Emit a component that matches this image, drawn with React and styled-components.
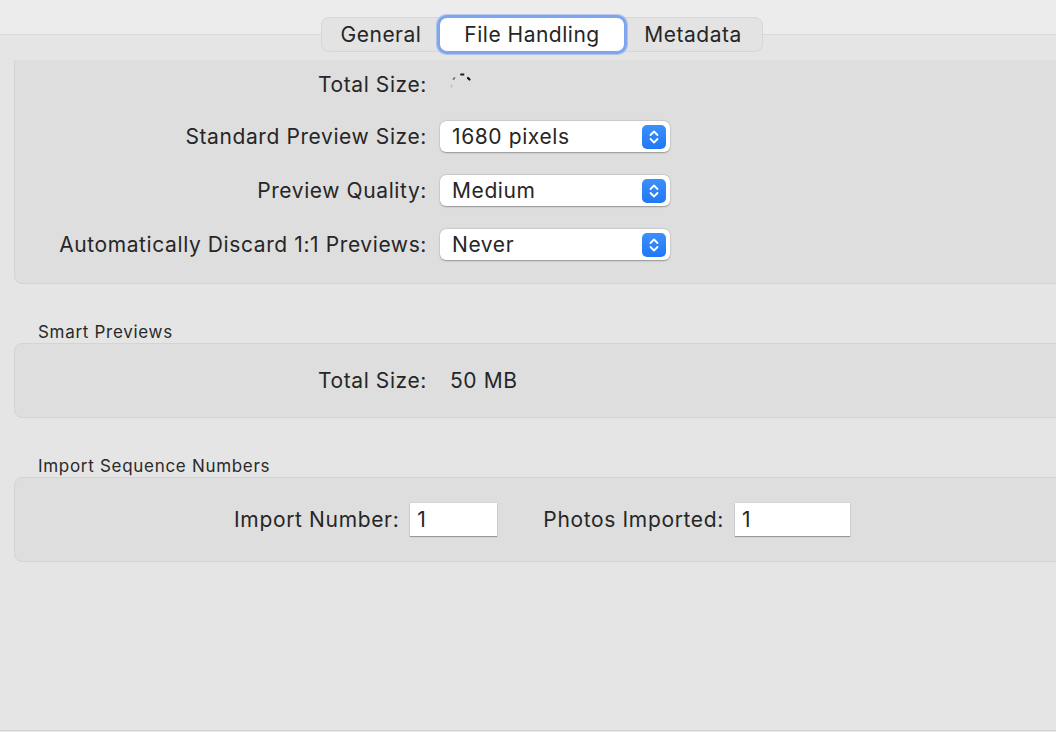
import React from "react";
import styled, { createGlobalStyle } from "styled-components";

const Global = createGlobalStyle`
  html, body { margin: 0; padding: 0; background: #e5e5e5; overflow: hidden; }
  body { font-family: Inter, "Noto Sans", "Liberation Sans", sans-serif; color: #262626; }
  * { box-sizing: border-box; }
`;

const Window = styled.div`
  width: 1084px;
  height: 731px;
  background: #e5e5e5;
  border-bottom: 1px solid #d3d3d3;
  display: flex;
  flex-direction: column;
  position: relative;
`;

const TopBar = styled.div`
  height: 35px;
  background: #ececec;
  border-bottom: 1px solid #d9d9d9;
  flex-shrink: 0;
`;

const TabsWrap = styled.div`
  position: absolute;
  top: 17px;
  left: 0;
  right: 0;
  display: flex;
  justify-content: center;
  z-index: 2;
`;

const Segmented = styled.div`
  display: flex;
  height: 35px;
  background: #e3e3e3;
  border: 1px solid #d6d6d6;
  border-radius: 8px;
`;

const Tab = styled.div`
  height: 100%;
  width: ${(p) => p.$w}px;
  display: flex;
  align-items: center;
  justify-content: center;
  font-size: 21px;
  letter-spacing: 0.5px;
  color: #262626;
  position: relative;
  ${(p) =>
    p.$active &&
    `
    background: #ffffff;
    border-radius: 7px;
    box-shadow: 0 0 0 3px #7ea5ee, 0 0 0 4px rgba(126,165,238,0.5);
  `}
`;

const Content = styled.div`
  padding: 25px 14px 0;
  display: flex;
  flex-direction: column;
`;

const Panel = styled.div`
  background: #dedede;
  border: 1px solid #d4d4d4;
  border-radius: 8px;
  ${(p) => p.$clipped && `border-top: none; border-top-left-radius: 0; border-top-right-radius: 0;`}
`;

const FormGrid = styled.div`
  display: grid;
  grid-template-columns: 412px 1fr;
  column-gap: 13px;
  row-gap: 23px;
  padding: 11px 0 23px;
  align-items: center;
`;

const Label = styled.div`
  font-size: 21px;
  letter-spacing: 0.6px;
  text-align: right;
  color: #262626;
  white-space: nowrap;
  line-height: ${(p) => p.$h || 31}px;
`;

const Value = styled.div`
  font-size: 21px;
  letter-spacing: 0.6px;
  padding-left: ${(p) => p.$pad || 10}px;
  color: #262626;
  display: flex;
  align-items: center;
  height: ${(p) => p.$h || 31}px;
`;

const Select = styled.div`
  width: 230px;
  height: 31px;
  background: #ffffff;
  border-radius: 6px;
  box-shadow: 0 0.5px 1.5px rgba(0, 0, 0, 0.3), 0 0 0 0.5px rgba(0, 0, 0, 0.06);
  display: flex;
  align-items: center;
  justify-content: space-between;
  padding: 0 4px 0 12px;
  font-size: 21px;
  letter-spacing: 0.6px;
  color: #262626;
`;

const Stepper = styled.div`
  width: 24px;
  height: 24px;
  border-radius: 5px;
  background: linear-gradient(#3d8ffb, #1f78f5);
  display: flex;
  align-items: center;
  justify-content: center;
`;

const SectionTitle = styled.div`
  font-size: 17px;
  letter-spacing: 0.7px;
  color: #2a2a2a;
  padding-left: 24px;
  margin-top: 38px;
  margin-bottom: 1px;
  line-height: 20px;
`;

const SingleRow = styled.div`
  display: grid;
  grid-template-columns: 412px 1fr;
  column-gap: 13px;
  align-items: center;
  height: 73px;
`;

const InputRow = styled.div`
  display: flex;
  justify-content: center;
  align-items: center;
  height: 83px;
  gap: 10px;
`;

const Field = styled.div`
  display: flex;
  align-items: center;
  gap: 11px;
  margin-right: ${(p) => p.$mr || 0}px;
`;

const InputLabel = styled.span`
  font-size: 21px;
  letter-spacing: 0.65px;
  color: #262626;
`;

const TextInput = styled.div`
  width: ${(p) => p.$w}px;
  height: 33px;
  background: #ffffff;
  box-shadow: 0 1px 1px rgba(0, 0, 0, 0.28), 0 0 0 0.5px rgba(0, 0, 0, 0.08);
  font-size: 21px;
  display: flex;
  align-items: center;
  padding-left: 7px;
  color: #262626;
`;

const Chevrons = () => (
  <svg width="12" height="16" viewBox="0 0 12 16">
    <path d="M2.5 6 L6 2.5 L9.5 6" fill="none" stroke="#fff" strokeWidth="1.8" strokeLinecap="round" strokeLinejoin="round" />
    <path d="M2.5 10 L6 13.5 L9.5 10" fill="none" stroke="#fff" strokeWidth="1.8" strokeLinecap="round" strokeLinejoin="round" />
  </svg>
);

const Spinner = () => (
  <svg width="28" height="28" viewBox="0 0 28 28">
    <g strokeLinecap="round" strokeWidth="1.8">
      <line x1="14" y1="3.5" x2="16.5" y2="3.5" stroke="#1a1a1a" />
      <line x1="21" y1="7" x2="22.5" y2="8.5" stroke="#111" strokeWidth="2.2" />
      <line x1="6.5" y1="8" x2="7.5" y2="7" stroke="#777" />
      <line x1="4.5" y1="14" x2="4.5" y2="16" stroke="#bdbdbd" strokeWidth="1.4" />
    </g>
  </svg>
);

const SelectBox = ({ children }) => (
  <Select>
    <span>{children}</span>
    <Stepper>
      <Chevrons />
    </Stepper>
  </Select>
);

export default function App() {
  return (
    <>
      <Global />
      <Window>
        <TopBar />
        <TabsWrap>
          <Segmented>
            <Tab $w={118}>General</Tab>
            <Tab $w={184} $active>File Handling</Tab>
            <Tab $w={138}>Metadata</Tab>
          </Segmented>
        </TabsWrap>
        <Content>
          <Panel $clipped>
            <FormGrid>
              <Label $h={27}>Total Size:</Label>
              <Value $h={27} $pad={7}>
                <Spinner />
              </Value>
              <Label>Standard Preview Size:</Label>
              <div><SelectBox>1680 pixels</SelectBox></div>
              <Label>Preview Quality:</Label>
              <div><SelectBox>Medium</SelectBox></div>
              <Label>Automatically Discard 1:1 Previews:</Label>
              <div><SelectBox>Never</SelectBox></div>
            </FormGrid>
          </Panel>

          <SectionTitle>Smart Previews</SectionTitle>
          <Panel>
            <SingleRow>
              <Label>Total Size:</Label>
              <Value $pad={10}>50 MB</Value>
            </SingleRow>
          </Panel>

          <SectionTitle>Import Sequence Numbers</SectionTitle>
          <Panel>
            <InputRow>
              <Field $mr={36}>
                <InputLabel>Import Number:</InputLabel>
                <TextInput $w={87}>1</TextInput>
              </Field>
              <Field>
                <InputLabel>Photos Imported:</InputLabel>
                <TextInput $w={115}>1</TextInput>
              </Field>
            </InputRow>
          </Panel>
        </Content>
      </Window>
    </>
  );
}
